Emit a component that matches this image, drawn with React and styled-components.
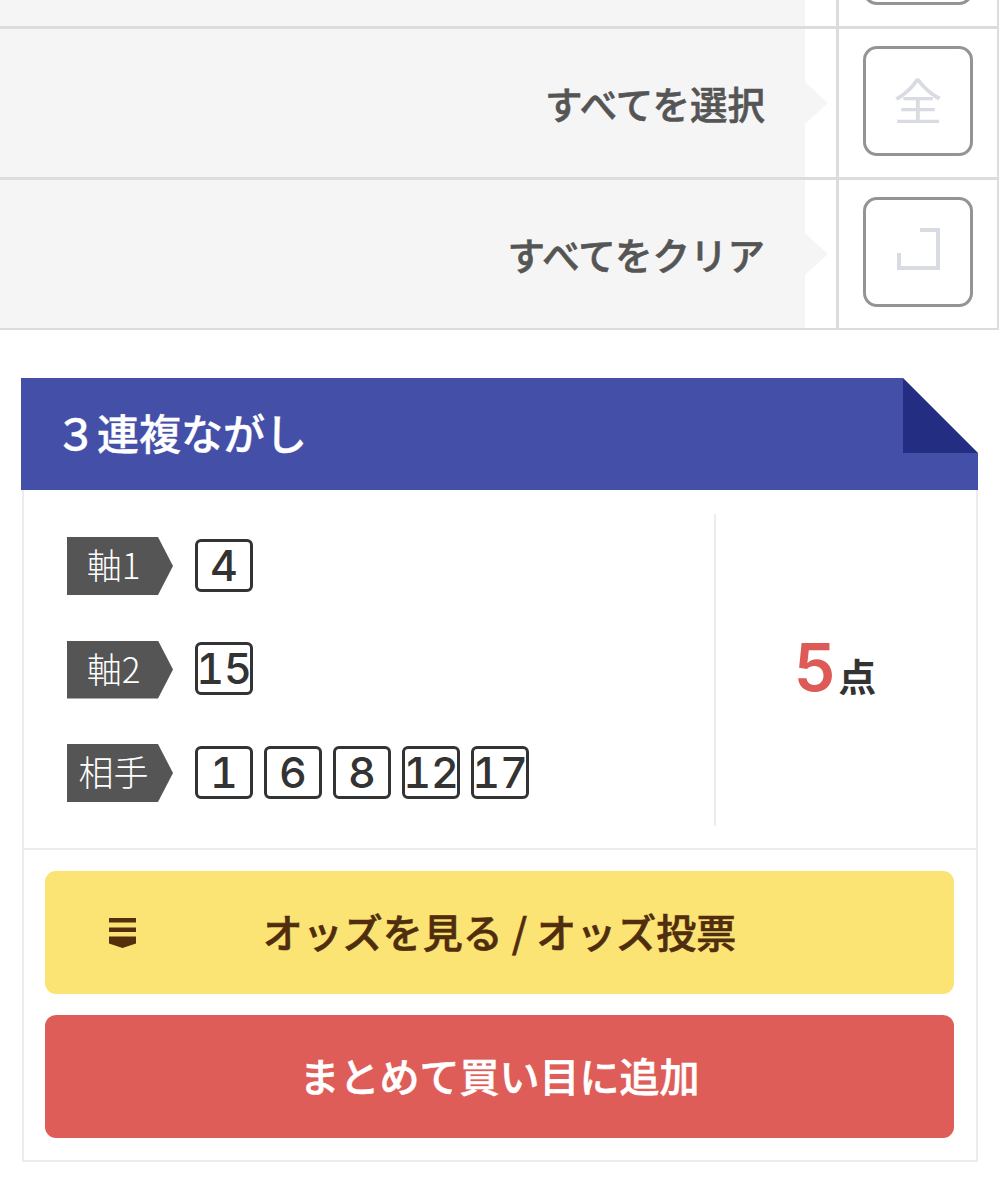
import React from "react";
import styled, { createGlobalStyle } from "styled-components";

const GlobalStyle = createGlobalStyle`
  html, body {
    margin: 0;
    padding: 0;
    background: #fff;
  }
  body {
    font-family: "Noto Sans CJK JP", "Noto Sans", sans-serif;
    overflow-x: hidden;
  }
  * {
    box-sizing: border-box;
  }
`;

const Page = styled.div`
  width: 999px;
  height: 1200px;
  overflow: hidden;
`;

/* 上の行は画面外に切れている */
const ActionTable = styled.div`
  margin-top: -122px;
  border-right: 2px solid #dcdcdc;
  border-bottom: 2px solid #dcdcdc;
`;

const ActionRow = styled.div`
  display: flex;
  height: 151px;
  border-bottom: 3px solid #dcdcdc;
  &:last-child {
    height: 148px;
    border-bottom: 0;
  }
`;

const LabelCell = styled.div`
  width: 839px;
  border-right: 3px solid #dcdcdc;
`;

const LabelArrow = styled.div`
  width: 828px;
  height: 100%;
  padding-right: 63px;
  display: flex;
  align-items: center;
  justify-content: flex-end;
  background: #f5f5f5;
  clip-path: polygon(
    0 0,
    805px 0,
    805px calc(50% - 21px),
    100% 50%,
    805px calc(50% + 21px),
    805px 100%,
    0 100%
  );
  color: #555;
  font-size: 37.5px;
  font-weight: 500;
  -webkit-text-stroke: 0.6px #555;
  line-height: 1;
`;

const ButtonCell = styled.div`
  flex: 1;
  padding: 17px 0 0 24px;
`;

const SquareButton = styled.div`
  width: 110px;
  height: 110px;
  padding-bottom: ${(props) => props.$lift || 0}px;
  border: 3px solid #949494;
  border-radius: 14px;
  display: flex;
  align-items: center;
  justify-content: center;
  color: #d9dbe3;
  font-size: 49px;
  font-weight: 400;
  line-height: 1;
  background: #fff;
`;

const Panel = styled.section`
  width: 957px;
  margin: 48px 0 0 21px;
`;

const PanelHeader = styled.div`
  position: relative;
  height: 112px;
  padding: 0 0 4px 34px;
  display: flex;
  align-items: center;
  background: #444fa8;
  clip-path: polygon(0 0, 882px 0, 100% 75px, 100% 100%, 0 100%);
  color: #fff;
  font-size: 42px;
  font-weight: 500;
  -webkit-text-stroke: 0.4px #fff;
  line-height: 1;
`;

const Fold = styled.div`
  position: absolute;
  top: 0;
  left: 882px;
  width: 75px;
  height: 75px;
  background: #232d82;
  clip-path: polygon(0 0, 100% 100%, 0 100%);
`;

const PanelBody = styled.div`
  border: 2px solid #ececf0;
  border-top: 0;
  margin-left: 1px;
  margin-right: 0;
`;

const Summary = styled.div`
  display: flex;
  height: 360px;
  padding: 24px 0 22px;
  border-bottom: 2px solid #ececf0;
`;

const Selections = styled.div`
  width: 692px;
  padding: 23px 0 0 43px;
  border-right: 2px solid #ececf0;
  display: flex;
  flex-direction: column;
  gap: 45.5px;
`;

const SelectionRow = styled.div`
  display: flex;
  align-items: center;
  gap: 22px;
`;

const Tag = styled.div`
  width: 106px;
  height: 58px;
  padding: 0 13px 5px 0;
  display: flex;
  align-items: center;
  justify-content: center;
  background: #555;
  clip-path: polygon(0 0, 91px 0, 100% 50%, 91px 100%, 0 100%);
  color: #fff;
  font-size: 35px;
  font-weight: 300;
  line-height: 1;
`;

const Numbers = styled.div`
  display: flex;
  gap: 11px;
  margin-bottom: 2px;
`;

const NumberBox = styled.div`
  width: 58px;
  height: 53px;
  border: 3px solid #333;
  border-radius: 6px;
  display: flex;
  align-items: center;
  justify-content: center;
  color: #333;
  font-family: Inter, "Liberation Sans", sans-serif;
  font-size: 43px;
  font-weight: 500;
  font-variant-numeric: tabular-nums;
  line-height: 1;
  letter-spacing: 0;
`;

const Total = styled.div`
  flex: 1;
  padding: 0 22px 7px 0;
  display: flex;
  align-items: center;
  justify-content: center;
`;

const Amount = styled.div`
  display: flex;
  align-items: baseline;
  gap: 3px;
  color: #333;
  font-size: 38px;
  font-weight: 700;
  line-height: 1;
`;

const AmountValue = styled.span`
  color: #dd5a56;
  font-family: Inter, "Liberation Sans", sans-serif;
  font-size: 66px;
  font-weight: 600;
`;

const Actions = styled.div`
  padding: 21px 22px 22px 21px;
  display: flex;
  flex-direction: column;
  gap: 21px;
`;

const ActionButton = styled.div`
  height: 123px;
  border-radius: 11px;
  padding-bottom: 4px;
  display: grid;
  grid-template-columns: 1fr auto 1fr;
  align-items: center;
  background: ${(props) => props.$bg};
  color: ${(props) => props.$color};
  font-size: 40px;
  font-weight: 500;
  -webkit-text-stroke: 0.6px ${(props) => props.$color};
  line-height: 1;
`;

const ButtonIcon = styled.svg`
  margin: 4px 0 0 64px;
`;

const ButtonText = styled.span`
  grid-column: 2;
`;

function ClearIcon() {
  return (
    <svg width="104" height="104" viewBox="0 0 104 104" fill="none">
      <path d="M54 30H72V68H33V53" stroke="#d9dbe3" strokeWidth="4" />
    </svg>
  );
}

function OddsIcon() {
  return (
    <ButtonIcon width="27" height="30" viewBox="0 0 27 30" fill="#552f0c">
      <rect width="27" height="4.5" />
      <rect y="9.5" width="27" height="4.5" />
      <path d="M0 18.5H27V25.5L13.5 30L0 25.5Z" />
    </ButtonIcon>
  );
}

const rows = [
  { label: "軸1", numbers: [4] },
  { label: "軸2", numbers: [15] },
  { label: "相手", numbers: [1, 6, 8, 12, 17] },
];

export default function App() {
  return (
    <Page>
      <GlobalStyle />
      <ActionTable>
        <ActionRow>
          <LabelCell>
            <LabelArrow />
          </LabelCell>
          <ButtonCell>
            <SquareButton />
          </ButtonCell>
        </ActionRow>
        <ActionRow>
          <LabelCell>
            <LabelArrow>すべてを選択</LabelArrow>
          </LabelCell>
          <ButtonCell>
            <SquareButton $lift={6}>全</SquareButton>
          </ButtonCell>
        </ActionRow>
        <ActionRow>
          <LabelCell>
            <LabelArrow>すべてをクリア</LabelArrow>
          </LabelCell>
          <ButtonCell>
            <SquareButton>
              <ClearIcon />
            </SquareButton>
          </ButtonCell>
        </ActionRow>
      </ActionTable>

      <Panel>
        <PanelHeader>
          ３連複ながし
          <Fold />
        </PanelHeader>
        <PanelBody>
          <Summary>
            <Selections>
              {rows.map((row) => (
                <SelectionRow key={row.label}>
                  <Tag>{row.label}</Tag>
                  <Numbers>
                    {row.numbers.map((n) => (
                      <NumberBox key={n}>{n}</NumberBox>
                    ))}
                  </Numbers>
                </SelectionRow>
              ))}
            </Selections>
            <Total>
              <Amount>
                <AmountValue>5</AmountValue>点
              </Amount>
            </Total>
          </Summary>
          <Actions>
            <ActionButton $bg="#fbe473" $color="#4f2d0e">
              <OddsIcon />
              <ButtonText>オッズを見る / オッズ投票</ButtonText>
            </ActionButton>
            <ActionButton $bg="#de5d58" $color="#fff">
              <ButtonText>まとめて買い目に追加</ButtonText>
            </ActionButton>
          </Actions>
        </PanelBody>
      </Panel>
    </Page>
  );
}
